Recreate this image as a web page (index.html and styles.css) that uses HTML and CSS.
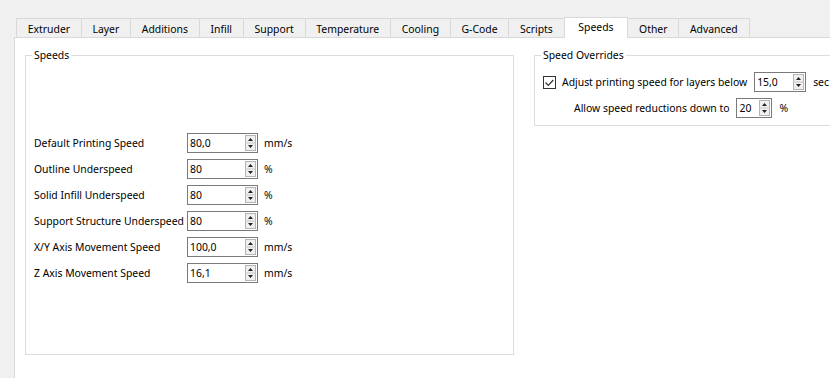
FILE: index.html
```html
<!DOCTYPE html>
<html>
<head>
<meta charset="utf-8">
<link rel="stylesheet" href="styles.css">
</head>
<body>
<div class="window">
  <div class="tabs">
    <div class="tab">Extruder</div>
    <div class="tab">Layer</div>
    <div class="tab">Additions</div>
    <div class="tab">Infill</div>
    <div class="tab">Support</div>
    <div class="tab">Temperature</div>
    <div class="tab">Cooling</div>
    <div class="tab">G-Code</div>
    <div class="tab">Scripts</div>
    <div class="tab active">Speeds</div>
    <div class="tab">Other</div>
    <div class="tab">Advanced</div>
  </div>
  <div class="panel">
    <fieldset class="group speeds">
      <legend>Speeds</legend>
      <div class="grid">
        <span class="lbl">Default Printing Speed</span>
        <span class="spin"><span class="val">80,0</span><svg class="arrows" width="11" height="16" viewBox="0 0 11 16"><rect x="0.5" y="0.5" width="10" height="15" fill="#f0f0f0" stroke="#b4b4b4"/><line x1="0" y1="8" x2="11" y2="8" stroke="#c8c8c8"/><path d="M3 6h5L5.5 3z M3 10h5l-2.5 3z" fill="#222"/></svg></span>
        <span class="unit">mm/s</span>

        <span class="lbl">Outline Underspeed</span>
        <span class="spin"><span class="val">80</span><svg class="arrows" width="11" height="16" viewBox="0 0 11 16"><rect x="0.5" y="0.5" width="10" height="15" fill="#f0f0f0" stroke="#b4b4b4"/><line x1="0" y1="8" x2="11" y2="8" stroke="#c8c8c8"/><path d="M3 6h5L5.5 3z M3 10h5l-2.5 3z" fill="#222"/></svg></span>
        <span class="unit">%</span>

        <span class="lbl">Solid Infill Underspeed</span>
        <span class="spin"><span class="val">80</span><svg class="arrows" width="11" height="16" viewBox="0 0 11 16"><rect x="0.5" y="0.5" width="10" height="15" fill="#f0f0f0" stroke="#b4b4b4"/><line x1="0" y1="8" x2="11" y2="8" stroke="#c8c8c8"/><path d="M3 6h5L5.5 3z M3 10h5l-2.5 3z" fill="#222"/></svg></span>
        <span class="unit">%</span>

        <span class="lbl">Support Structure Underspeed</span>
        <span class="spin"><span class="val">80</span><svg class="arrows" width="11" height="16" viewBox="0 0 11 16"><rect x="0.5" y="0.5" width="10" height="15" fill="#f0f0f0" stroke="#b4b4b4"/><line x1="0" y1="8" x2="11" y2="8" stroke="#c8c8c8"/><path d="M3 6h5L5.5 3z M3 10h5l-2.5 3z" fill="#222"/></svg></span>
        <span class="unit">%</span>

        <span class="lbl">X/Y Axis Movement Speed</span>
        <span class="spin"><span class="val">100,0</span><svg class="arrows" width="11" height="16" viewBox="0 0 11 16"><rect x="0.5" y="0.5" width="10" height="15" fill="#f0f0f0" stroke="#b4b4b4"/><line x1="0" y1="8" x2="11" y2="8" stroke="#c8c8c8"/><path d="M3 6h5L5.5 3z M3 10h5l-2.5 3z" fill="#222"/></svg></span>
        <span class="unit">mm/s</span>

        <span class="lbl">Z Axis Movement Speed</span>
        <span class="spin"><span class="val">16,1</span><svg class="arrows" width="11" height="16" viewBox="0 0 11 16"><rect x="0.5" y="0.5" width="10" height="15" fill="#f0f0f0" stroke="#b4b4b4"/><line x1="0" y1="8" x2="11" y2="8" stroke="#c8c8c8"/><path d="M3 6h5L5.5 3z M3 10h5l-2.5 3z" fill="#222"/></svg></span>
        <span class="unit">mm/s</span>
      </div>
    </fieldset>
    <fieldset class="group overrides">
      <legend>Speed Overrides</legend>
      <div class="orow">
        <svg class="check" width="13" height="13" viewBox="0 0 13 13"><rect x="0.5" y="0.5" width="12" height="12" fill="#fff" stroke="#333"/><path d="M2.5 6.5l2.8 2.8 5-5.3" fill="none" stroke="#333" stroke-width="1.2"/></svg>
        <span class="otext">Adjust printing speed for layers below</span>
        <span class="spin s52"><span class="val">15,0</span><svg class="arrows" width="11" height="16" viewBox="0 0 11 16"><rect x="0.5" y="0.5" width="10" height="15" fill="#f0f0f0" stroke="#b4b4b4"/><line x1="0" y1="8" x2="11" y2="8" stroke="#c8c8c8"/><path d="M3 6h5L5.5 3z M3 10h5l-2.5 3z" fill="#222"/></svg></span>
        <span class="ounit">sec</span>
      </div>
      <div class="orow indent">
        <span class="otext">Allow speed reductions down to</span>
        <span class="spin s36"><span class="val">20</span><svg class="arrows" width="11" height="16" viewBox="0 0 11 16"><rect x="0.5" y="0.5" width="10" height="15" fill="#f0f0f0" stroke="#b4b4b4"/><line x1="0" y1="8" x2="11" y2="8" stroke="#c8c8c8"/><path d="M3 6h5L5.5 3z M3 10h5l-2.5 3z" fill="#222"/></svg></span>
        <span class="ounit">%</span>
      </div>
    </fieldset>
  </div>
</div>
</body>
</html>
```

FILE: styles.css
```css
* { box-sizing: border-box; }
html, body {
  margin: 0;
  width: 830px;
  height: 378px;
  overflow: hidden;
  background: #f0f0f0;
  font-family: "Noto Sans", "Open Sans", sans-serif;
  font-size: 10.4px;
  color: #000;
}
.window {
  padding: 18px 0 0 14px;
  height: 378px;
  display: flex;
  flex-direction: column;
}
.tabs {
  display: flex;
  align-items: flex-end;
  margin-left: 2px;
  height: 19px;
  position: relative;
  z-index: 1;
}
.tab {
  height: 19px;
  line-height: 18px;
  padding: 1px 10.75px 0;
  border: 1px solid #d9d9d9;
  border-bottom: none;
  margin-left: -1px;
  background: #f0f0f0;
  white-space: nowrap;
}
.tab:first-child { margin-left: 0; }
.tab.active {
  height: 21px;
  margin-bottom: -1px;
  background: #fff;
  padding: 0 13.75px;
}
.panel {
  flex: 1;
  background: #fff;
  border-top: 1px solid #d9d9d9;
  border-left: 1px solid #d9d9d9;
  padding: 10px 0 0 10px;
  display: flex;
  align-items: flex-start;
  gap: 20px;
}
.group {
  margin: 0;
  padding: 0 8px;
  border: 1px solid #dcdcdc;
  min-width: 0;
}
.group legend {
  padding: 0 2px;
  margin-left: -2px;
  line-height: 14px;
}
.speeds {
  width: 489px;
  height: 307px;
  flex: none;
}
.overrides {
  width: 320px;
  flex: none;
  padding-bottom: 7px;
}
.grid {
  display: grid;
  grid-template-columns: 153px 71px auto;
  row-gap: 6px;
  align-items: center;
  margin-top: 71px;
}
.lbl, .unit, .otext, .ounit { white-space: nowrap; line-height: 20px; }
.unit { margin-left: 6px; }
.spin {
  display: flex;
  align-items: center;
  justify-content: space-between;
  height: 20px;
  border: 1px solid #7a7a7a;
  background: #fff;
  padding: 0 1px 0 2px;
}
.spin.s52 { width: 52px; }
.spin.s36 { width: 36px; }
.val { line-height: 18px; }
.arrows { display: block; flex: none; }
.orow {
  display: flex;
  align-items: center;
  height: 20px;
  margin-top: 10px;
}
.orow.indent {
  padding-left: 31px;
  margin-top: 6px;
}
.check { flex: none; margin-right: 6px; }
.orow .spin { margin-left: 7px; }
.ounit { margin-left: 7px; }
```
